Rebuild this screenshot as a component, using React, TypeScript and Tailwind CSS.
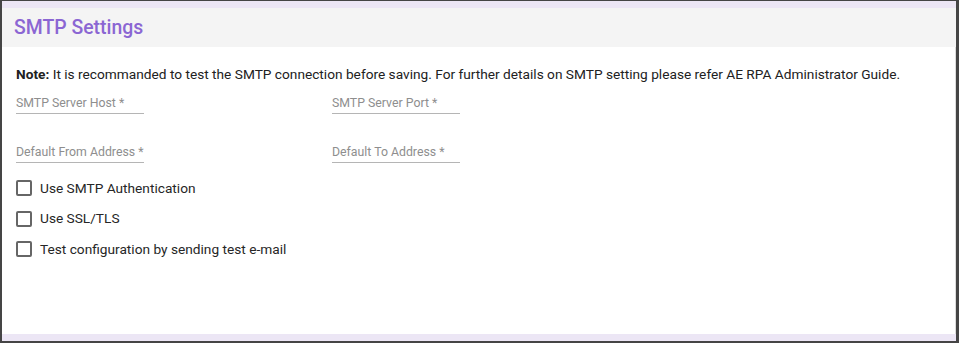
import { useState } from 'react';

const fields = [
  ['SMTP Server Host *', 'SMTP Server Port *'],
  ['Default From Address *', 'Default To Address *'],
];

const options = ['Use SMTP Authentication', 'Use SSL/TLS', 'Test configuration by sending test e-mail'];

function Field({ label }: { label: string }) {
  return (
    <div className="w-[128px] border-b border-[#b5b5b5] pb-[2px]">
      <span className="block whitespace-nowrap text-[12.3px] leading-[16px] text-[#8e8e8e]">{label}</span>
    </div>
  );
}

export default function App() {
  const [checked, setChecked] = useState<boolean[]>([false, false, false]);

  return (
    <div
      className="w-[959px] h-[343px] flex flex-col border-l-2 border-t border-r-[3px] border-b-2 border-[#454545] bg-white"
      style={{ fontFamily: 'Roboto, "Liberation Sans", sans-serif' }}
    >
      <div className="h-[7px] bg-[#ece6f5]" />

      {/* Header */}
      <div className="h-[39px] bg-[#f4f4f4] px-[12px] flex items-center">
        <h1 className="text-[19.4px] font-medium text-[#8b66d3] leading-none">SMTP Settings</h1>
      </div>

      {/* Body */}
      <div className="flex-1 px-[14px] pt-[17px] border-r border-[#dcdcdc]">
        <p className="text-[13.7px] leading-[20px] text-[#212121]">
          <span className="font-bold">Note:</span> It is recommanded to test the SMTP connection before saving. For
          further details on SMTP setting please refer AE RPA Administrator Guide.
        </p>

        <div className="mt-[11px] flex flex-col gap-[30px]">
          {fields.map((row, i) => (
            <div key={i} className="grid grid-cols-[316px_316px]">
              {row.map((f) => (
                <Field key={f} label={f} />
              ))}
            </div>
          ))}
        </div>

        <div className="mt-[10px] flex flex-col">
          {options.map((o, i) => (
            <label key={o} className="h-[30.5px] flex items-center gap-[8px] cursor-pointer">
              <button
                onClick={() => setChecked((c) => c.map((v, j) => (j === i ? !v : v)))}
                className="w-[16px] h-[16px] rounded-[2px] border-2 border-[#666666] bg-white"
              />
              <span className="text-[13.7px] text-[#262626]">{o}</span>
            </label>
          ))}
        </div>
      </div>

      <div className="h-[7px] bg-[#ece6f5]" />
    </div>
  );
}
